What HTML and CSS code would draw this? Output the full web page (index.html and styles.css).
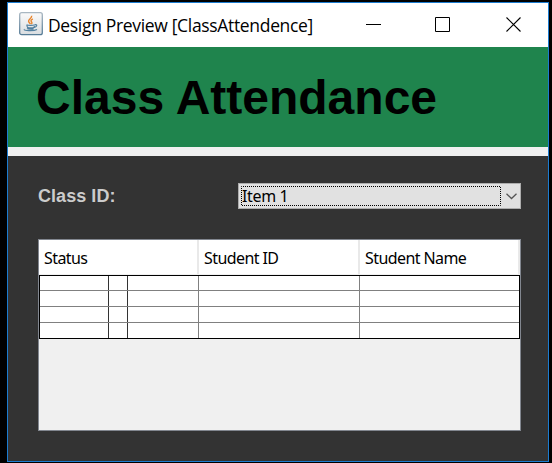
FILE: index.html
```html
<!DOCTYPE html>
<html lang="en">
<head>
<meta charset="utf-8">
<title>Design Preview [ClassAttendence]</title>
<link rel="stylesheet" href="styles.css">
</head>
<body>
<div class="window">
  <header class="titlebar">
    <svg class="app-icon" width="24" height="24" viewBox="0 0 24 24">
      <defs><linearGradient id="tile" x1="0" y1="0" x2="0" y2="1"><stop offset="0" stop-color="#fafafa"/><stop offset="1" stop-color="#d9dde0"/></linearGradient>
      <linearGradient id="edge" x1="0" y1="0" x2="0" y2="1"><stop offset="0" stop-color="#a9b7c2"/><stop offset="1" stop-color="#557b96"/></linearGradient></defs>
      <rect x=".7" y=".7" width="22.6" height="22" rx="2" fill="url(#tile)" stroke="url(#edge)" stroke-width="1.3"/>
      <path d="M12.6 3.8c.8 2.500-3.600 3.400-3 5.700.2.800 1.300 1.700 1.800 2.500M13.800 6.800c-2.700 1.500-1.800 2.400-1 3.400.4.600 0 1.400-.5 1.800" fill="none" stroke="#e8842c" stroke-width="1.400"/>
      <path d="M7.500 12.700c1.500 1 6.500.900 8.500 0M7.800 13.500c.2 1.500 1 2.300 2 2.300h3.700c1.200 0 1.800-.8 2-1.700M15.800 12.800c2.700-.8 2.600 2-.4 2.500M5.500 17.300c-1.800 1.500 9.500 2 12.500.1M8 16.500c1 .8 5 .9 6.700.2" fill="none" stroke="#52809f" stroke-width="1.200"/>
    </svg>
    <span class="title">Design Preview [ClassAttendence]</span>
    <svg class="controls" width="156" height="16" viewBox="0 0 156 16" fill="none" stroke="#000">
      <path d="M0 7.500h15M69.500.5h14v14h-14z"/>
      <path d="M140.500.5l14 14M154.500.5l-14 14" stroke-width="1.100"/>
    </svg>
  </header>
  <div class="banner"><h1>Class Attendance</h1></div>
  <main class="content">
    <div class="field">
      <label class="label">Class ID:</label>
      <div class="combo">
        <svg class="focus" width="260" height="20"><rect x=".5" y=".5" width="259" height="19" fill="none" stroke="#000" stroke-dasharray="1 1" stroke-dashoffset=".5"/></svg>
        <span class="value">Item 1</span>
        <svg class="arrow" width="11" height="7" viewBox="0 0 11 7"><path d="M.5.800l5 4.700 5-4.700" fill="none" stroke="#555" stroke-width="1.300"/></svg>
      </div>
    </div>
    <div class="pane">
      <div class="head"><span>Status</span><span>Student ID</span><span>Student Name</span></div>
      <div class="grid">
        <div class="row"><i class="dark"></i><i class="dark"></i><i></i><i></i><i></i></div>
        <div class="row"><i class="dark"></i><i class="dark"></i><i></i><i></i><i></i></div>
        <div class="row"><i class="dark"></i><i class="dark"></i><i></i><i></i><i></i></div>
        <div class="row"><i class="dark"></i><i class="dark"></i><i></i><i></i><i></i></div>
      </div>
    </div>
  </main>
</div>
</body>
</html>
```
FILE: styles.css
```css
* { box-sizing: border-box; }
body { margin: 0; padding: 2px 0 0 7px; background: #000; height: 463px; overflow: hidden; }
.window { width: 542px; height: 460px; border: 1px solid #1c7cd0; background: #f0f0f0; }
.titlebar { height: 44px; background: #fff; display: flex; align-items: flex-start; padding-left: 11px; }
.app-icon { margin-top: 9px; flex: none; }
.title { width: 318px; margin: 10px 0 0 5px; font: 17.500px/24px "Open Sans", sans-serif; letter-spacing: -.33px; white-space: nowrap; color: #000; }
.controls { flex: none; margin-top: 14px; }
.banner { height: 100px; background: #1f844d; padding: 22px 0 0 28px; }
h1 { margin: 0; font: bold 48px/58px "Liberation Sans", sans-serif; white-space: nowrap; color: #000; }
.content { margin-top: 9px; height: 305px; background: #333; padding: 27px 27px 0 30px; }
.field { display: flex; justify-content: space-between; height: 26px; }
.label { font: bold 18px/26px "Liberation Sans", sans-serif; letter-spacing: .05px; color: #ccc; }
.combo { position: relative; width: 283px; height: 26px; border: 1px solid #adadad; background: #e1e1e1; display: flex; justify-content: space-between; align-items: center; padding: 0 3px; }
.focus { position: absolute; left: 2px; top: 2px; }
.value, .head { font: 16px/24px "Noto Sans", sans-serif; letter-spacing: -.58px; color: #000; }
.value { letter-spacing: -.35px; }
.pane { margin-top: 30px; width: 483px; height: 192px; border: 1px solid #828790; background: #f0f0f0; }
.head { display: grid; grid-template-columns: 160px 161px 160px; height: 35px; background: #fff; border-bottom: 1px solid #f0f0f0; }
.head span { padding: 6px 0 0 5px; border-right: 2px solid #e9e9e9; white-space: nowrap; }
.grid { height: 64px; border: 1px solid #000; background: #fff; display: grid; grid-template-rows: 15px 16px 16px 15px; }
.row { display: grid; grid-template-columns: 69px 19px 71px 161px 159px; border-bottom: 1px solid #808080; }
.row:last-child { border-bottom: 0; }
.row i { border-right: 1px solid #808080; }
.row .dark { border-color: #333; }
.row i:last-child { border-right: 0; }
```
